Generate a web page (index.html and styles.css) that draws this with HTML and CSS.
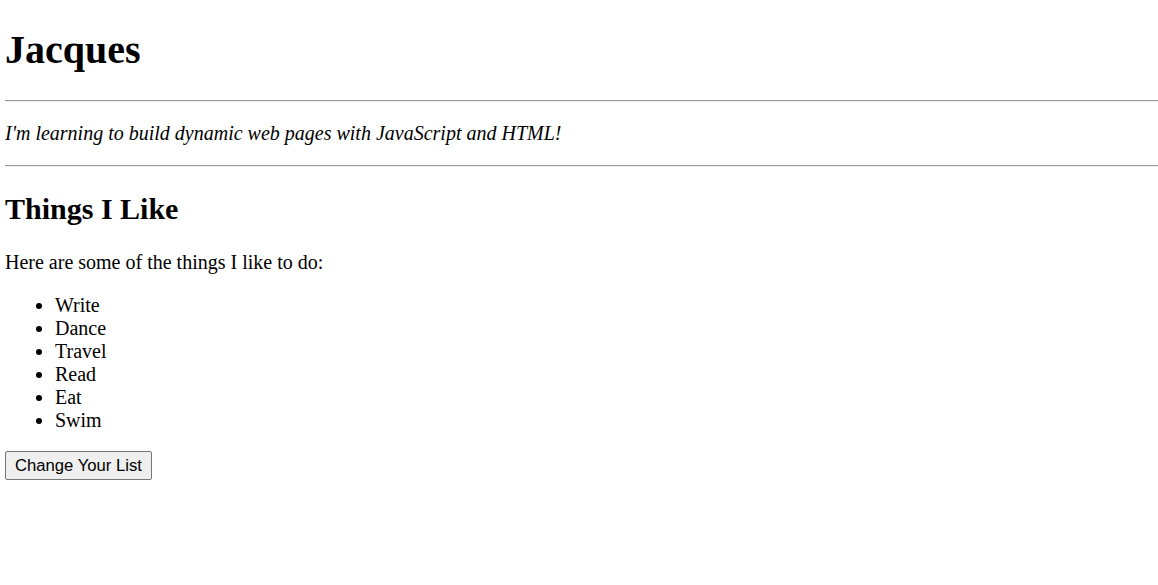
FILE: index.html
```html
<!DOCTYPE html>
<html>
<head>
<meta charset="utf-8">
<title>Jacques</title>
<link rel="stylesheet" href="styles.css">
</head>
<body class="page">
<h1 class="title">Jacques</h1>
<hr class="rule">
<p class="tagline">I'm learning to build dynamic web pages with JavaScript and HTML!</p>
<hr class="rule">
<h2 class="section-title">Things I Like</h2>
<p class="intro">Here are some of the things I like to do:</p>
<ul class="likes">
<li>Write</li>
<li>Dance</li>
<li>Travel</li>
<li>Read</li>
<li>Eat</li>
<li>Swim</li>
</ul>
<button class="change-btn" type="button">Change Your List</button>
</body>
</html>
```
FILE: styles.css
```css
html, body {
  background: #fff;
}
.page {
  margin: 0 0 0 5px;
  font-family: "Liberation Serif", "Times New Roman", serif;
  font-size: 20px;
  color: #000;
}
.title {
  font-size: 40px;
  font-weight: bold;
  margin: 25.8px 0 26.8px;
}
.rule {
  margin: 10px 0;
  border: none;
  border-top: 1px solid #9a9a9a;
  border-bottom: 1px solid #eeeeee;
  height: 0;
}
.tagline {
  font-style: italic;
  margin: 20px 0;
}
.section-title {
  font-size: 30px;
  font-weight: bold;
  margin: 25.9px 0 24.9px;
}
.intro {
  margin: 20px 0;
}
.likes {
  margin: 20px 0 19px;
  padding-left: 50px;
  list-style: disc;
}
.change-btn {
  font-family: "Liberation Sans", Arial, sans-serif;
  font-size: 16.67px;
  color: #000;
  background: #efefef;
  border: 1px solid #767676;
  border-radius: 2px;
  padding: 4px 9px 3px;
  margin: 0;
}
```
